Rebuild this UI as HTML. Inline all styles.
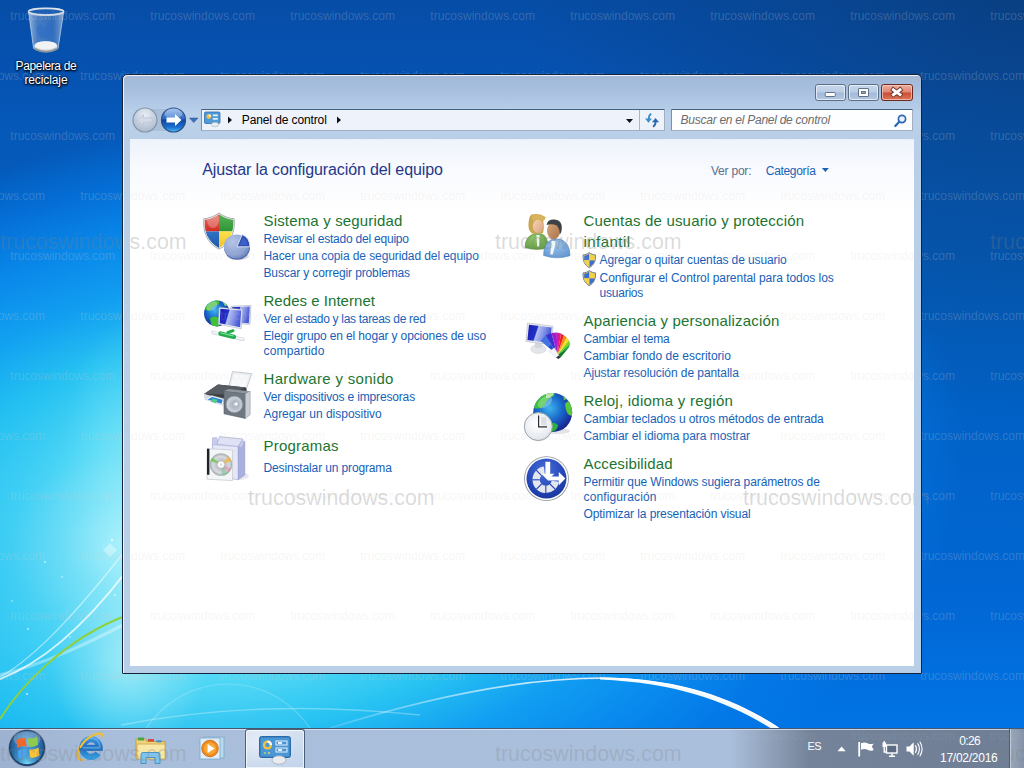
<!DOCTYPE html>
<html lang="es"><head><meta charset="utf-8"><title>Panel de control</title>
<style>
html,body{margin:0;padding:0;}
body{width:1024px;height:768px;overflow:hidden;position:relative;background:#0d55b0;font-family:"Liberation Sans",sans-serif;font-size:12px;}
.abs{position:absolute;}
.t{position:absolute;white-space:nowrap;margin:0;padding:0;}
#desk{position:absolute;left:0;top:0;width:1024px;height:768px;overflow:hidden;
 background:
  radial-gradient(ellipse 500px 420px at 1024px 0px, rgba(12,50,95,0.5) 0%, rgba(12,55,110,0.3) 50%, rgba(10,60,120,0) 100%),
  linear-gradient(180deg,#064da6 0%,#0651b0 8%,#0558b8 16%,#035dbc 35%,#0161c6 55%,#0167d4 78%,#0178ea 100%);}
#glow{position:absolute;left:-1259px;top:-968px;width:3000px;height:3000px;transform:rotate(-10deg);
 background:radial-gradient(ellipse 731px 413px at 50% 50%, rgba(165,240,251,1) 0%, rgba(140,232,248,1) 18.3%, rgba(85,218,246,1) 33%, rgba(40,195,242,1) 48%, rgba(18,160,242,0.97) 62%, rgba(10,142,240,0.88) 75.2%, rgba(5,124,234,0.6) 87.8%, rgba(3,110,222,0) 100%);}
#glow2{position:absolute;left:0;top:0;width:1024px;height:768px;
 background:
  radial-gradient(ellipse 120px 300px at 0px 580px, rgba(12,178,240,0.36) 0%, rgba(12,178,240,0.2) 50%, rgba(12,178,240,0) 100%),
  radial-gradient(ellipse 60px 120px at 125px 440px, rgba(150,234,248,0.3) 0%, rgba(150,234,248,0) 100%),
  radial-gradient(ellipse 110px 90px at 120px 545px, rgba(175,242,252,0.8) 0%, rgba(150,236,250,0.4) 50%, rgba(120,228,248,0) 100%),
  radial-gradient(ellipse 80px 90px at 128px 660px, rgba(170,236,246,0.85) 0%, rgba(150,230,246,0.45) 55%, rgba(120,228,248,0) 100%);}
.wm{position:absolute;white-space:nowrap;font-family:"Liberation Sans",sans-serif;pointer-events:none;}
.wms{font-size:12px;line-height:12px;color:rgba(205,205,205,0.24);}
.wmb{font-size:21.4px;line-height:22px;color:rgba(128,128,128,0.26);}
#win{position:absolute;left:122px;top:74px;width:800px;height:600px;box-sizing:border-box;border:1px solid #14233a;border-radius:5px 5px 1px 1px;
 background:linear-gradient(180deg,#a3b8d6 0px,#a5bddc 11px,#afc7e4 25px,#b9d0ea 38px,#bbd1ea 45px,#b9cfe8 65px,#b9cfe8 100%);
 box-shadow:inset 1px 1px 0 0 rgba(245,249,254,0.9);}
#content{position:absolute;left:130px;top:139px;width:784px;height:527px;background:#fff;
 background:linear-gradient(180deg,#eef3fb 0px,#f8fafe 30px,#ffffff 70px,#ffffff 100%);}
#addr{position:absolute;left:201px;top:109px;width:464px;height:22px;box-sizing:border-box;border:1px solid #a3afc0;border-top-color:#46607f;border-left-color:#7f8fa6;background:#eef3fb;border-radius:1px;}
#search{position:absolute;left:671px;top:109px;width:242px;height:22px;box-sizing:border-box;border:1px solid #a3afc0;border-top-color:#46607f;border-left-color:#7f8fa6;background:#fdfeff;border-radius:1px;}
#taskbar{position:absolute;left:0;top:728px;width:1024px;height:40px;box-sizing:border-box;border-top:1px solid #46586f;
 background:linear-gradient(90deg,#9db2d0 0px,#a9bedb 120px,#aabfdc 730px,#8d9db5 775px,#74839a 810px,#6f7e95 1024px);}
#taskbar:before{content:"";position:absolute;left:0;top:0;width:1024px;height:1px;background:rgba(220,232,246,0.8);}
.wms2{font-size:12px;line-height:12px;color:rgba(205,205,205,0.18);}
.wmb2{font-size:21.4px;line-height:22px;color:rgba(128,128,128,0.28);}
#wmdesk{position:absolute;left:0;top:0;width:1024px;height:768px;overflow:hidden;}
#wmwin{position:absolute;left:130px;top:139px;width:784px;height:527px;overflow:hidden;}
#wmwin2{position:absolute;left:-130px;top:-139px;width:1024px;height:768px;}
</style></head>
<body>
<div id="desk">
<div id="glow"></div><div id="glow2"></div>
<svg class="abs" style="left:0;top:0" width="1024" height="768" viewBox="0 0 1024 768">
 <defs>
  <linearGradient id="sw1" x1="0" y1="0" x2="1" y2="0"><stop offset="0" stop-color="#fff" stop-opacity="0.15"/><stop offset="0.45" stop-color="#fff" stop-opacity="0.75"/><stop offset="0.75" stop-color="#fff" stop-opacity="1"/><stop offset="1" stop-color="#fff" stop-opacity="1"/></linearGradient>
 </defs>
 <!-- big white swoosh bottom -->
 <path d="M330 728 C 420 700, 520 678, 603 678 C 680 679, 735 700, 778 728" fill="none" stroke="url(#sw1)" stroke-width="1.6"/>
 <path d="M600 677.5 C 680 678, 735 698, 781 729 L 772 729 C 730 703, 680 683, 600 679.5z" fill="#ffffff" opacity="0.95"/>
 <!-- faint arcs -->
 <circle cx="228" cy="782" r="98" fill="#ffffff" fill-opacity="0.03" stroke="#ffffff" stroke-opacity="0.2" stroke-width="1.2"/>
 <path d="M121 725 Q 260 698 420 715" fill="none" stroke="#ffffff" stroke-opacity="0.3" stroke-width="1.4"/>
 <path d="M900 728 Q 960 705 1024 690" fill="none" stroke="#ffffff" stroke-opacity="0.0" stroke-width="1"/>
 <!-- left swooshes -->
 <path d="M0 675 C 45 664, 90 642, 125 624" fill="none" stroke="#ffffff" stroke-opacity="0.35" stroke-width="3.2"/>
 <path d="M0 677 C 40 655, 88 598, 125 551" fill="none" stroke="#ffffff" stroke-opacity="0.5" stroke-width="1.3"/>
 <path d="M0 679 C 50 660, 95 612, 125 573" fill="none" stroke="#ffffff" stroke-opacity="0.75" stroke-width="2"/>
 <path d="M103 550 l7 -7 l7 7 l-7 7z" fill="#ffffff" opacity="0.35"/>
 <path d="M0 719 C 18 690, 62 640, 125 616" fill="none" stroke="#8ed13c" stroke-width="1.9"/>
 <g fill="#ffffff" opacity="0.7"><circle cx="45" cy="562" r="0.9"/><circle cx="62" cy="577" r="0.8"/><circle cx="28" cy="629" r="0.9"/><circle cx="70" cy="637" r="0.8"/><circle cx="112" cy="540" r="1.2"/><circle cx="27" cy="694" r="1.1"/><circle cx="12" cy="601" r="0.8"/><circle cx="115" cy="595" r="0.9"/></g>
</svg>
</div>
<svg class="abs" style="left:20px;top:4px" width="56" height="54" viewBox="20 4 56 54">
 <defs>
  <linearGradient id="binG" x1="0" y1="0" x2="1" y2="0"><stop offset="0" stop-color="#cfe0f4" stop-opacity="0.7"/><stop offset="0.25" stop-color="#86aadc" stop-opacity="0.5"/><stop offset="0.7" stop-color="#6f9ad2" stop-opacity="0.42"/><stop offset="1" stop-color="#c0d4ee" stop-opacity="0.65"/></linearGradient>
 </defs>
 <path d="M28.6 12 L33.6 48.5 Q46 54.5 58 48.5 L63.6 12 Q46 18 28.6 12z" fill="url(#binG)" stroke="#b9cbe2" stroke-width="0.8"/>
 <path d="M36 28 l5 -4 l3 5 l6 -8 l4 10 l-5 8 l-10 -2z" fill="#2f6cc4" opacity="0.6"/>
 <ellipse cx="45.8" cy="46.4" rx="11.6" ry="5.2" fill="#d9dde2"/>
 <ellipse cx="45.8" cy="45.2" rx="11" ry="4" fill="#f1f2f4"/>
 <path d="M34.4 47.5 Q46 54 57.4 47.5 L57 50 Q46 55.5 34.8 50z" fill="#8d949c"/>
 <ellipse cx="46.1" cy="11.8" rx="17.6" ry="3.4" fill="#3f78c4" fill-opacity="0.45" stroke="#c9d3df" stroke-width="1.6"/>
 <ellipse cx="46.1" cy="11.4" rx="17.8" ry="3.2" fill="none" stroke="#eef2f7" stroke-width="0.6"/>
</svg>
<div id="taskbar"></div>
<!-- active task button -->
<div class="abs" style="left:245px;top:729px;width:60px;height:39px;box-sizing:border-box;border:1px solid #4e5f78;border-bottom:none;border-radius:3px 3px 0 0;background:radial-gradient(ellipse 40px 30px at 12px 14px,rgba(255,255,255,0.45),rgba(255,255,255,0)),linear-gradient(180deg,#d6e2f2 0%,#cbdaee 50%,#c3d4ec 100%);box-shadow:inset 0 0 0 1px rgba(255,255,255,0.7);"></div>
<!-- show desktop -->
<div class="abs" style="left:1009px;top:729px;width:15px;height:39px;box-sizing:border-box;border-left:1px solid #4f5d72;background:linear-gradient(90deg,#9aa7ba,#8392a8);box-shadow:inset 1px 0 0 rgba(220,228,240,0.6);"></div>
<svg class="abs" style="left:0;top:728px" width="1024" height="40" viewBox="0 0 1024 40">
 <defs>
  <radialGradient id="orb" cx="0.5" cy="0.35" r="0.75"><stop offset="0" stop-color="#5fa6d8"/><stop offset="0.5" stop-color="#2a6aa8"/><stop offset="0.85" stop-color="#154578"/><stop offset="1" stop-color="#0d2f57"/></radialGradient>
  <linearGradient id="ieG" x1="0" y1="0" x2="0" y2="1"><stop offset="0" stop-color="#3a93de"/><stop offset="0.5" stop-color="#1c66bd"/><stop offset="1" stop-color="#2d9be4"/></linearGradient>
  <radialGradient id="orbglow" cx="0.5" cy="1" r="0.7"><stop offset="0" stop-color="#7fe2ff" stop-opacity="0.95"/><stop offset="0.5" stop-color="#45b4e8" stop-opacity="0.55"/><stop offset="1" stop-color="#3aa0e0" stop-opacity="0"/></radialGradient>
 </defs>
 <!-- start orb -->
 <circle cx="27" cy="20" r="18.6" fill="#3c5878" opacity="0.55"/>
 <circle cx="27" cy="20" r="17.4" fill="url(#orb)" stroke="#1d3557" stroke-width="1"/>
 <circle cx="27" cy="20" r="16.2" fill="url(#orbglow)"/>
 <ellipse cx="27" cy="11" rx="13.5" ry="8" fill="#ffffff" opacity="0.22"/>
 <g transform="translate(28,19.6) rotate(-7) scale(1.18)">
  <path d="M-9 -7.5 q4 -2.2 8 -0.6 v7 q-4 -1.6 -8 0.6z" fill="#f0672c"/>
  <path d="M0.8 -8 q4 1.8 8 -0.4 v7 q-4 2.2 -8 0.4z" fill="#8fcb4c"/>
  <path d="M-9 1.8 q4 -2.2 8 -0.6 v7 q-4 -1.6 -8 0.6z" fill="#4aa3ee"/>
  <path d="M0.8 1.3 q4 1.8 8 -0.4 v7 q-4 2.2 -8 0.4z" fill="#fbc23a"/>
 </g>
 <!-- IE -->
 <g transform="translate(0,-1)">
  <path d="M78.5 31 q-3.5 -4 3 -13" fill="none" stroke="#e8b12c" stroke-width="2.2" stroke-linecap="round"/>
  <path d="M82.6 20.8 L99.6 20.8 A8.6 8.8 0 1 0 98 26.2" fill="none" stroke="url(#ieG)" stroke-width="6.2"/>
  <path d="M82.6 20.8 L99.6 20.8 A8.6 8.8 0 0 0 84 14.6" fill="none" stroke="#6cc0f2" stroke-width="2" opacity="0.6"/>
  <path d="M80.6 20 q4 -8 13 -12 q8 -3 9.6 1" fill="none" stroke="#f0bd38" stroke-width="2.2" stroke-linecap="round"/>
  <path d="M78.5 31 q1 3 5 1.6" fill="none" stroke="#e8b12c" stroke-width="1.8" stroke-linecap="round"/>
 </g>
 <!-- Explorer -->
 <g transform="translate(135,8)">
  <path d="M1 3 h9 l2 2.5 h18 v17 h-29z" fill="#f0d27a" stroke="#c09a3a" stroke-width="0.9"/>
  <rect x="3" y="1.5" width="6" height="3" fill="#49a742"/><rect x="13" y="3" width="6" height="2.5" fill="#d64a3a"/><rect x="21.5" y="4.2" width="5" height="2.2" fill="#3f8fd8"/>
  <rect x="2" y="8" width="28" height="15" rx="1" fill="#f8e7a6" stroke="#c9a648" stroke-width="0.8"/>
  <path d="M6 27.5 v-9 q0 -2 2 -2 h15 q2 0 2 2 v9 h-5 v-6 h-9 v6z" fill="#7fc4ee" stroke="#3f8dc2" stroke-width="0.9"/>
 </g>
 <!-- Media Player -->
 <g transform="translate(199,8)">
  <rect x="5" y="1" width="20" height="21" fill="#b9d9ef" stroke="#7aa9cc" stroke-width="0.8"/>
  <rect x="1" y="2" width="20" height="21" fill="#dfeefa" stroke="#7aa9cc" stroke-width="0.8"/>
  <circle cx="11" cy="12.5" r="8.3" fill="#f08a1c" stroke="#c86a10" stroke-width="0.8"/>
  <circle cx="11" cy="12.5" r="6" fill="#f7a83a"/>
  <path d="M8.6 8 l7 4.5 l-7 4.5z" fill="#ffffff"/>
 </g>
 <!-- Control panel task icon -->
 <g transform="translate(259,8)">
  <rect x="0.5" y="0.5" width="31" height="21" rx="2" fill="#3d86c6" stroke="#2a6aa8" stroke-width="1"/>
  <rect x="2" y="2" width="28" height="18" rx="1" fill="#4b97d6"/>
  <circle cx="8.5" cy="9" r="4.6" fill="#f2c23c"/><path d="M8.5 9 v-4.6 a4.6 4.6 0 0 1 4.6 4.6z" fill="#ffffff"/>
  <circle cx="8.5" cy="9" r="2.2" fill="#4b97d6"/>
  <rect x="17" y="5" width="11" height="4" fill="#4b97d6" stroke="#e4effa" stroke-width="1"/><rect x="19" y="6" width="4" height="2" fill="#e4effa"/><rect x="17" y="12" width="11" height="4" fill="#4b97d6" stroke="#e4effa" stroke-width="1"/><rect x="19" y="13" width="4" height="2" fill="#e4effa"/>
  <circle cx="6" cy="17" r="1" fill="#9be06a"/><circle cx="10" cy="17" r="1" fill="#f4d35a"/>
  <ellipse cx="20" cy="24" rx="7" ry="4.2" fill="#e9ecef" stroke="#98a2ad" stroke-width="0.7"/>
 </g>
 <!-- tray -->
 <path d="M837.5 23.3 l4.1 -4.8 l4.1 4.8z" fill="#ffffff"/>
 <g fill="none" stroke="#ffffff" stroke-width="1.4">
  <path d="M859.2 14 v14.5" stroke-width="1.8"/>
  <path d="M861 15.2 q3.5 -1.6 6.5 0 q3 1.6 6.3 0.3 l-2 3 l2 3.6 q-3.3 1.3 -6.3 -0.3 q-3 -1.6 -6.5 0z" fill="#ffffff" stroke="none"/>
 </g>
 <g>
  <rect x="886.5" y="17" width="10.5" height="8" fill="#5c6b80" stroke="#ffffff" stroke-width="1.4"/>
  <path d="M889 28.3 h6 M892 25 v3" stroke="#ffffff" stroke-width="1.4"/>
  <path d="M884.2 13 v11 h2" stroke="#ffffff" stroke-width="1.4" fill="none"/>
  <rect x="882.5" y="14.5" width="3.6" height="4.5" fill="#ffffff"/>
 </g>
 <g>
  <path d="M906.5 18.5 h3 l4.2 -4.2 v13.4 l-4.2 -4.2 h-3z" fill="#ffffff"/>
  <path d="M915.5 17.5 q2 3.5 0 7 M917.8 15.6 q3.2 5.4 0 10.8 M920 14 q4.2 7 0 14" fill="none" stroke="#ffffff" stroke-width="1.1" stroke-linecap="round"/>
 </g>
</svg>
<div id="wmdesk">
<div class="wm wms" style="left:10.3px;top:10.1px">trucoswindows.com</div>
<div class="wm wms" style="left:150.3px;top:10.1px">trucoswindows.com</div>
<div class="wm wms" style="left:290.3px;top:10.1px">trucoswindows.com</div>
<div class="wm wms" style="left:430.3px;top:10.1px">trucoswindows.com</div>
<div class="wm wms" style="left:570.3px;top:10.1px">trucoswindows.com</div>
<div class="wm wms" style="left:710.3px;top:10.1px">trucoswindows.com</div>
<div class="wm wms" style="left:850.3px;top:10.1px">trucoswindows.com</div>
<div class="wm wms" style="left:990.3px;top:10.1px">trucoswindows.com</div>
<div class="wm wms" style="left:1130.3px;top:10.1px">trucoswindows.com</div>
<div class="wm wms" style="left:-59.7px;top:70.1px">trucoswindows.com</div>
<div class="wm wms" style="left:80.3px;top:70.1px">trucoswindows.com</div>
<div class="wm wms" style="left:220.3px;top:70.1px">trucoswindows.com</div>
<div class="wm wms" style="left:360.3px;top:70.1px">trucoswindows.com</div>
<div class="wm wms" style="left:500.3px;top:70.1px">trucoswindows.com</div>
<div class="wm wms" style="left:640.3px;top:70.1px">trucoswindows.com</div>
<div class="wm wms" style="left:780.3px;top:70.1px">trucoswindows.com</div>
<div class="wm wms" style="left:920.3px;top:70.1px">trucoswindows.com</div>
<div class="wm wms" style="left:1060.3px;top:70.1px">trucoswindows.com</div>
<div class="wm wms" style="left:10.3px;top:130.1px">trucoswindows.com</div>
<div class="wm wms" style="left:150.3px;top:130.1px">trucoswindows.com</div>
<div class="wm wms" style="left:290.3px;top:130.1px">trucoswindows.com</div>
<div class="wm wms" style="left:430.3px;top:130.1px">trucoswindows.com</div>
<div class="wm wms" style="left:570.3px;top:130.1px">trucoswindows.com</div>
<div class="wm wms" style="left:710.3px;top:130.1px">trucoswindows.com</div>
<div class="wm wms" style="left:850.3px;top:130.1px">trucoswindows.com</div>
<div class="wm wms" style="left:990.3px;top:130.1px">trucoswindows.com</div>
<div class="wm wms" style="left:1130.3px;top:130.1px">trucoswindows.com</div>
<div class="wm wms" style="left:-59.7px;top:190.1px">trucoswindows.com</div>
<div class="wm wms" style="left:80.3px;top:190.1px">trucoswindows.com</div>
<div class="wm wms" style="left:220.3px;top:190.1px">trucoswindows.com</div>
<div class="wm wms" style="left:360.3px;top:190.1px">trucoswindows.com</div>
<div class="wm wms" style="left:500.3px;top:190.1px">trucoswindows.com</div>
<div class="wm wms" style="left:640.3px;top:190.1px">trucoswindows.com</div>
<div class="wm wms" style="left:780.3px;top:190.1px">trucoswindows.com</div>
<div class="wm wms" style="left:920.3px;top:190.1px">trucoswindows.com</div>
<div class="wm wms" style="left:1060.3px;top:190.1px">trucoswindows.com</div>
<div class="wm wms" style="left:10.3px;top:250.1px">trucoswindows.com</div>
<div class="wm wms" style="left:150.3px;top:250.1px">trucoswindows.com</div>
<div class="wm wms" style="left:290.3px;top:250.1px">trucoswindows.com</div>
<div class="wm wms" style="left:430.3px;top:250.1px">trucoswindows.com</div>
<div class="wm wms" style="left:570.3px;top:250.1px">trucoswindows.com</div>
<div class="wm wms" style="left:710.3px;top:250.1px">trucoswindows.com</div>
<div class="wm wms" style="left:850.3px;top:250.1px">trucoswindows.com</div>
<div class="wm wms" style="left:990.3px;top:250.1px">trucoswindows.com</div>
<div class="wm wms" style="left:1130.3px;top:250.1px">trucoswindows.com</div>
<div class="wm wms" style="left:-59.7px;top:310.1px">trucoswindows.com</div>
<div class="wm wms" style="left:80.3px;top:310.1px">trucoswindows.com</div>
<div class="wm wms" style="left:220.3px;top:310.1px">trucoswindows.com</div>
<div class="wm wms" style="left:360.3px;top:310.1px">trucoswindows.com</div>
<div class="wm wms" style="left:500.3px;top:310.1px">trucoswindows.com</div>
<div class="wm wms" style="left:640.3px;top:310.1px">trucoswindows.com</div>
<div class="wm wms" style="left:780.3px;top:310.1px">trucoswindows.com</div>
<div class="wm wms" style="left:920.3px;top:310.1px">trucoswindows.com</div>
<div class="wm wms" style="left:1060.3px;top:310.1px">trucoswindows.com</div>
<div class="wm wms" style="left:10.3px;top:370.1px">trucoswindows.com</div>
<div class="wm wms" style="left:150.3px;top:370.1px">trucoswindows.com</div>
<div class="wm wms" style="left:290.3px;top:370.1px">trucoswindows.com</div>
<div class="wm wms" style="left:430.3px;top:370.1px">trucoswindows.com</div>
<div class="wm wms" style="left:570.3px;top:370.1px">trucoswindows.com</div>
<div class="wm wms" style="left:710.3px;top:370.1px">trucoswindows.com</div>
<div class="wm wms" style="left:850.3px;top:370.1px">trucoswindows.com</div>
<div class="wm wms" style="left:990.3px;top:370.1px">trucoswindows.com</div>
<div class="wm wms" style="left:1130.3px;top:370.1px">trucoswindows.com</div>
<div class="wm wms" style="left:-59.7px;top:430.1px">trucoswindows.com</div>
<div class="wm wms" style="left:80.3px;top:430.1px">trucoswindows.com</div>
<div class="wm wms" style="left:220.3px;top:430.1px">trucoswindows.com</div>
<div class="wm wms" style="left:360.3px;top:430.1px">trucoswindows.com</div>
<div class="wm wms" style="left:500.3px;top:430.1px">trucoswindows.com</div>
<div class="wm wms" style="left:640.3px;top:430.1px">trucoswindows.com</div>
<div class="wm wms" style="left:780.3px;top:430.1px">trucoswindows.com</div>
<div class="wm wms" style="left:920.3px;top:430.1px">trucoswindows.com</div>
<div class="wm wms" style="left:1060.3px;top:430.1px">trucoswindows.com</div>
<div class="wm wms" style="left:10.3px;top:490.1px">trucoswindows.com</div>
<div class="wm wms" style="left:150.3px;top:490.1px">trucoswindows.com</div>
<div class="wm wms" style="left:290.3px;top:490.1px">trucoswindows.com</div>
<div class="wm wms" style="left:430.3px;top:490.1px">trucoswindows.com</div>
<div class="wm wms" style="left:570.3px;top:490.1px">trucoswindows.com</div>
<div class="wm wms" style="left:710.3px;top:490.1px">trucoswindows.com</div>
<div class="wm wms" style="left:850.3px;top:490.1px">trucoswindows.com</div>
<div class="wm wms" style="left:990.3px;top:490.1px">trucoswindows.com</div>
<div class="wm wms" style="left:1130.3px;top:490.1px">trucoswindows.com</div>
<div class="wm wms" style="left:-59.7px;top:550.1px">trucoswindows.com</div>
<div class="wm wms" style="left:80.3px;top:550.1px">trucoswindows.com</div>
<div class="wm wms" style="left:220.3px;top:550.1px">trucoswindows.com</div>
<div class="wm wms" style="left:360.3px;top:550.1px">trucoswindows.com</div>
<div class="wm wms" style="left:500.3px;top:550.1px">trucoswindows.com</div>
<div class="wm wms" style="left:640.3px;top:550.1px">trucoswindows.com</div>
<div class="wm wms" style="left:780.3px;top:550.1px">trucoswindows.com</div>
<div class="wm wms" style="left:920.3px;top:550.1px">trucoswindows.com</div>
<div class="wm wms" style="left:1060.3px;top:550.1px">trucoswindows.com</div>
<div class="wm wms" style="left:10.3px;top:610.1px">trucoswindows.com</div>
<div class="wm wms" style="left:150.3px;top:610.1px">trucoswindows.com</div>
<div class="wm wms" style="left:290.3px;top:610.1px">trucoswindows.com</div>
<div class="wm wms" style="left:430.3px;top:610.1px">trucoswindows.com</div>
<div class="wm wms" style="left:570.3px;top:610.1px">trucoswindows.com</div>
<div class="wm wms" style="left:710.3px;top:610.1px">trucoswindows.com</div>
<div class="wm wms" style="left:850.3px;top:610.1px">trucoswindows.com</div>
<div class="wm wms" style="left:990.3px;top:610.1px">trucoswindows.com</div>
<div class="wm wms" style="left:1130.3px;top:610.1px">trucoswindows.com</div>
<div class="wm wms" style="left:-59.7px;top:670.1px">trucoswindows.com</div>
<div class="wm wms" style="left:80.3px;top:670.1px">trucoswindows.com</div>
<div class="wm wms" style="left:220.3px;top:670.1px">trucoswindows.com</div>
<div class="wm wms" style="left:360.3px;top:670.1px">trucoswindows.com</div>
<div class="wm wms" style="left:500.3px;top:670.1px">trucoswindows.com</div>
<div class="wm wms" style="left:640.3px;top:670.1px">trucoswindows.com</div>
<div class="wm wms" style="left:780.3px;top:670.1px">trucoswindows.com</div>
<div class="wm wms" style="left:920.3px;top:670.1px">trucoswindows.com</div>
<div class="wm wms" style="left:1060.3px;top:670.1px">trucoswindows.com</div>
<div class="wm wms" style="left:10.3px;top:730.1px;opacity:0.45">trucoswindows.com</div>
<div class="wm wms" style="left:150.3px;top:730.1px;opacity:0.45">trucoswindows.com</div>
<div class="wm wms" style="left:290.3px;top:730.1px;opacity:0.45">trucoswindows.com</div>
<div class="wm wms" style="left:430.3px;top:730.1px;opacity:0.45">trucoswindows.com</div>
<div class="wm wms" style="left:570.3px;top:730.1px;opacity:0.45">trucoswindows.com</div>
<div class="wm wms" style="left:710.3px;top:730.1px;opacity:0.45">trucoswindows.com</div>
<div class="wm wms" style="left:850.3px;top:730.1px;opacity:0.45">trucoswindows.com</div>
<div class="wm wms" style="left:990.3px;top:730.1px;opacity:0.45">trucoswindows.com</div>
<div class="wm wms" style="left:1130.3px;top:730.1px;opacity:0.45">trucoswindows.com</div>
<div class="wm wmb" style="left:0.0px;top:231.1px">trucoswindows.com</div>
<div class="wm wmb" style="left:495.0px;top:231.1px">trucoswindows.com</div>
<div class="wm wmb" style="left:990.0px;top:231.1px">trucoswindows.com</div>
<div class="wm wmb" style="left:248.0px;top:487.1px">trucoswindows.com</div>
<div class="wm wmb" style="left:743.0px;top:487.1px">trucoswindows.com</div>
<div class="wm wmb" style="left:0.0px;top:743.1px">trucoswindows.com</div>
<div class="wm wmb" style="left:495.0px;top:743.1px">trucoswindows.com</div>
<div class="wm wmb" style="left:990.0px;top:743.1px">trucoswindows.com</div>
</div>
<div id="win"></div>
<!-- window chrome -->
<div id="addr"></div>
<div class="abs" style="left:639px;top:110px;width:1px;height:20px;background:#a9b6c6"></div>
<div id="search"></div>
<svg class="abs" style="left:122px;top:75px" width="799" height="66" viewBox="0 0 799 66">
 <defs>
  <radialGradient id="gBack" cx="0.5" cy="0.3" r="0.7"><stop offset="0" stop-color="#e9eef5"/><stop offset="0.6" stop-color="#c3cedd"/><stop offset="1" stop-color="#aab8cc"/></radialGradient>
  <linearGradient id="gFwd" x1="0" y1="0" x2="0" y2="1"><stop offset="0" stop-color="#7fb2ea"/><stop offset="0.45" stop-color="#2a67c4"/><stop offset="0.5" stop-color="#0f459f"/><stop offset="0.8" stop-color="#1a6fd0"/><stop offset="1" stop-color="#49c0f5"/></linearGradient>
  <linearGradient id="gBtn" x1="0" y1="0" x2="0" y2="1"><stop offset="0" stop-color="#c9d9ec"/><stop offset="0.48" stop-color="#bacde6"/><stop offset="0.52" stop-color="#a3badb"/><stop offset="1" stop-color="#b4c8e3"/></linearGradient>
  <linearGradient id="gClose" x1="0" y1="0" x2="0" y2="1"><stop offset="0" stop-color="#eeb0a0"/><stop offset="0.48" stop-color="#e08672"/><stop offset="0.52" stop-color="#cc4c33"/><stop offset="1" stop-color="#dc7a5c"/></linearGradient>
 </defs>
 <!-- nav pill behind -->
 <path d="M23 34 h28 v22 h-28z" fill="#9fb2cc" opacity="0.55"/>
 <!-- back (disabled) -->
 <circle cx="23" cy="45" r="12" fill="url(#gBack)" stroke="#8595ab" stroke-width="1.2"/>
 <path d="M15.5 45 l6 -5.5 v3.3 h8.5 v4.4 h-8.5 v3.3z" fill="#d3dbe6" stroke="#b4c0d0" stroke-width="0.6"/>
 <!-- forward -->
 <circle cx="51.5" cy="45" r="12" fill="url(#gFwd)" stroke="#2c4f86" stroke-width="1.2"/>
 <ellipse cx="51.5" cy="38.5" rx="9" ry="5" fill="#ffffff" opacity="0.28"/>
 <path d="M59.5 45 l-6.5 -6 v3.6 h-8.5 v4.8 h8.5 v3.6z" fill="#ffffff"/>
 <!-- small dropdown -->
 <path d="M67.5 43 h8.5 l-4.25 4.6z" fill="#3d6fb5" stroke="#2b5595" stroke-width="0.5"/>
 <!-- CP icon in address bar -->
 <g transform="translate(82.5,37)">
  <rect x="0" y="0" width="15.5" height="11.5" rx="1.3" fill="#4f9ad8" stroke="#2c6fb0" stroke-width="0.8"/>
  <circle cx="4.3" cy="4.6" r="2.4" fill="#f2c23c"/><path d="M4.3 4.6 v-2.4 a2.4 2.4 0 0 1 2.4 2.4z" fill="#fff"/>
  <rect x="8.3" y="2.5" width="5" height="1.7" fill="#e8f2fb"/><rect x="8.3" y="6" width="5" height="1.7" fill="#e8f2fb"/>
  <ellipse cx="10.5" cy="12.5" rx="3.6" ry="2.3" fill="#e9ecef" stroke="#9aa4ae" stroke-width="0.5"/>
 </g>
 <!-- breadcrumb arrows -->
 <path d="M106 41.5 l4 3.5 l-4 3.5z" fill="#111"/>
 <path d="M215 41.5 l4 3.5 l-4 3.5z" fill="#111"/>
 <!-- addr dropdown -->
 <path d="M504 44 h7 l-3.5 4z" fill="#111"/>
 <!-- refresh arrows -->
 <path d="M529.2 38.8 q-2.6 1.6 -2.4 5.2" fill="none" stroke="#3a8ec4" stroke-width="1.8"/>
 <path d="M523 43.6 h7 l-3.5 4.2z" fill="#3a8ec4"/>
 <path d="M531 51.8 q2.6 -1.4 2.6 -5" fill="none" stroke="#2a68b4" stroke-width="1.8"/>
 <path d="M530 47.2 h7 l-3.5 -4.2z" fill="#2a68b4"/>
 <!-- magnifier -->
 <g transform="translate(772,39)"><circle cx="8" cy="5" r="3.6" fill="#e8f2fc" stroke="#2f68b0" stroke-width="1.7"/><path d="M5.3 7.8 l-4 4.2" stroke="#2f68b0" stroke-width="2.3" stroke-linecap="round"/></g>
 <!-- caption buttons -->
 <g>
  <rect x="693.5" y="9.5" width="30" height="16" rx="2.2" fill="url(#gBtn)" stroke="#5d6f88"/>
  <rect x="694.5" y="10.5" width="28" height="14" rx="2" fill="none" stroke="#eef3fa" stroke-opacity="0.8"/>
  <rect x="703.3" y="17.5" width="10" height="4" rx="0.8" fill="#fdfdfe" stroke="#55657c" stroke-width="0.9"/>
  <rect x="726.5" y="9.5" width="30" height="16" rx="2.2" fill="url(#gBtn)" stroke="#5d6f88"/>
  <rect x="727.5" y="10.5" width="28" height="14" rx="2" fill="none" stroke="#eef3fa" stroke-opacity="0.8"/>
  <rect x="736.5" y="13.5" width="10" height="8" rx="0.5" fill="#fdfdfe" stroke="#55657c" stroke-width="0.9"/>
  <rect x="739.5" y="16.5" width="4" height="2" fill="#8d9db3" stroke="#55657c" stroke-width="0.8"/>
  <rect x="759.5" y="9.5" width="31" height="16" rx="2.2" fill="url(#gClose)" stroke="#6b2a22"/>
  <rect x="760.5" y="10.5" width="29" height="14" rx="2" fill="none" stroke="#f6d2c8" stroke-opacity="0.7"/>
  <path d="M771.4 14.8 l6.6 4.8 M778 14.8 l-6.6 4.8" stroke="#6a2f28" stroke-width="4.6" stroke-linecap="square"/>
  <path d="M771.4 14.8 l6.6 4.8 M778 14.8 l-6.6 4.8" stroke="#ffffff" stroke-width="2.9" stroke-linecap="square"/>
 </g>
 <!-- Categoria triangle drawn in content coords -->
</svg>
<div id="content"></div>
<svg class="abs" style="left:0;top:0" width="1024" height="768" viewBox="0 0 1024 768">
 <defs>
  <linearGradient id="shR" x1="0" y1="0" x2="0" y2="1"><stop offset="0" stop-color="#e8776a"/><stop offset="1" stop-color="#d42a20"/></linearGradient>
  <linearGradient id="shG" x1="0" y1="0" x2="0" y2="1"><stop offset="0" stop-color="#5cb85a"/><stop offset="1" stop-color="#2f9435"/></linearGradient>
  <linearGradient id="shB" x1="0" y1="0" x2="0" y2="1"><stop offset="0" stop-color="#2f72c4"/><stop offset="1" stop-color="#1c55a5"/></linearGradient>
  <linearGradient id="shY" x1="0" y1="0" x2="0" y2="1"><stop offset="0" stop-color="#fbe04a"/><stop offset="1" stop-color="#f0c020"/></linearGradient>
  <radialGradient id="pie" cx="0.35" cy="0.3" r="0.8"><stop offset="0" stop-color="#b5c4e6"/><stop offset="0.7" stop-color="#8ea3d2"/><stop offset="1" stop-color="#5d77b8"/></radialGradient>
  <radialGradient id="globe" cx="0.42" cy="0.38" r="0.68"><stop offset="0" stop-color="#3fb4ec"/><stop offset="0.45" stop-color="#1b6ccc"/><stop offset="0.85" stop-color="#172f9c"/><stop offset="1" stop-color="#14247a"/></radialGradient>
  <linearGradient id="scr" x1="0" y1="0" x2="1" y2="0.3"><stop offset="0" stop-color="#1a22b8"/><stop offset="0.45" stop-color="#2b3cd0"/><stop offset="0.5" stop-color="#aab6f2"/><stop offset="1" stop-color="#6a7be0"/></linearGradient>
  <linearGradient id="scr2" x1="0" y1="0" x2="1" y2="0.25"><stop offset="0" stop-color="#1a1cb4"/><stop offset="0.42" stop-color="#2230c8"/><stop offset="0.47" stop-color="#b4bff4"/><stop offset="0.75" stop-color="#7f8fe6"/><stop offset="1" stop-color="#4a5ad6"/></linearGradient>
  <radialGradient id="cone" cx="0.55" cy="0.5" r="0.6"><stop offset="0" stop-color="#f3f5f8"/><stop offset="0.25" stop-color="#aab3bf"/><stop offset="0.8" stop-color="#cdd4dc"/><stop offset="1" stop-color="#e6eaef"/></radialGradient>
  <radialGradient id="cd" cx="0.5" cy="0.5" r="0.5"><stop offset="0" stop-color="#ffffff"/><stop offset="0.22" stop-color="#f4f4f4"/><stop offset="0.3" stop-color="#b8bcc0"/><stop offset="0.75" stop-color="#d9dcdf"/><stop offset="1" stop-color="#a9aeb3"/></radialGradient>
  <radialGradient id="acc" cx="0.45" cy="0.3" r="0.8"><stop offset="0" stop-color="#4a6fd8"/><stop offset="0.6" stop-color="#2447b8"/><stop offset="1" stop-color="#172f92"/></radialGradient>
  <radialGradient id="clock" cx="0.45" cy="0.4" r="0.65"><stop offset="0" stop-color="#ffffff"/><stop offset="0.8" stop-color="#e9edf1"/><stop offset="1" stop-color="#c3cad2"/></radialGradient>
  <linearGradient id="skinF" x1="0" y1="0" x2="1" y2="1"><stop offset="0" stop-color="#f6d2b5"/><stop offset="1" stop-color="#d9a480"/></linearGradient>
  <linearGradient id="skinM" x1="0" y1="0" x2="1" y2="1"><stop offset="0" stop-color="#d9a77c"/><stop offset="1" stop-color="#a8714a"/></linearGradient>
  <radialGradient id="bodyG" cx="0.4" cy="0.3" r="0.8"><stop offset="0" stop-color="#8fc46a"/><stop offset="1" stop-color="#5f9a3e"/></radialGradient>
  <radialGradient id="bodyB" cx="0.45" cy="0.3" r="0.8"><stop offset="0" stop-color="#9cc3ea"/><stop offset="1" stop-color="#5f94cf"/></radialGradient>
  <clipPath id="clipShield"><path d="M219 214.2 C214 217.6 209 219.4 204.8 219.8 C204 232 208 242 219 248 C230 242 234 232 233.2 219.8 C229 219.4 224 217.6 219 214.2z"/></clipPath>
  <clipPath id="clipG1"><circle cx="217" cy="313.4" r="13"/></clipPath>
  <clipPath id="clipG2"><circle cx="552.7" cy="412.6" r="19.5"/></clipPath>
 </defs>

 <!-- 1. Sistema y seguridad -->
 <g>
  <path d="M219 213 C214 216.6 208.6 218.5 203.8 218.8 C202.8 232.5 207.2 243.2 219 249.2 C230.8 243.2 235.2 232.5 234.2 218.8 C229.4 218.5 224 216.6 219 213z" fill="#f4f5f7" stroke="#9aa0a8" stroke-width="0.9"/>
  <g clip-path="url(#clipShield)">
   <rect x="203" y="212" width="16" height="19.4" fill="url(#shR)"/>
   <rect x="219" y="212" width="16" height="19.4" fill="url(#shG)"/>
   <rect x="203" y="231.4" width="16" height="19" fill="url(#shB)"/>
   <rect x="219" y="231.4" width="16" height="19" fill="url(#shY)"/>
   <ellipse cx="213" cy="220" rx="6" ry="8" fill="#ffffff" opacity="0.25"/>
  </g>
  <ellipse cx="238" cy="256.5" rx="11" ry="3.5" fill="#9aa3b5" opacity="0.35"/>
  <ellipse cx="237" cy="247.6" rx="13" ry="12.2" fill="#4b66b0"/>
  <ellipse cx="236.6" cy="246.6" rx="12.8" ry="12" fill="url(#pie)"/>
  <path d="M237 246.8 L242.2 234.6 A13 12.2 0 0 1 249.8 246.8z" fill="#2c4bb0" stroke="#dfe6f6" stroke-width="0.9"/>
  <path d="M239.3 245.3 L242.9 237.2 A10 10 0 0 1 247.6 245.3z" fill="#3c5fc8"/>
 </g>

 <!-- 2. Redes e Internet -->
 <g>
  <circle cx="217" cy="313.4" r="13" fill="url(#globe)"/>
  <g clip-path="url(#clipG1)" fill="#3fbf3a">
   <path d="M205 304 q5 -5 12 -4 q4 2 1 5 q-5 0 -7 5 q-4 2 -6 -1z"/>
   <path d="M210 318 q5 -3 9 0 q3 4 0 8 q-5 3 -8 -2z"/>
   <path d="M222 301 q5 0 7 4 l-4 1z" fill="#7fd87a"/>
  </g>
  <ellipse cx="212" cy="306" rx="6" ry="4" fill="#ffffff" opacity="0.3" transform="rotate(-35 212 306)"/>
  <path d="M231 306.2 l20 -0.8 l-1 19 l-18.5 -1.2z" fill="#e4e8f0" stroke="#a9b2c2" stroke-width="0.6"/>
  <path d="M232.2 307.2 l17.6 -0.7 l-0.9 16.8 l-16.2 -1z" fill="url(#scr2)"/>
  <path d="M219.2 307.4 l23.2 2 l-1.2 19.4 l-22.8 -4.6z" fill="#eef1f6" stroke="#a9b2c2" stroke-width="0.6"/>
  <path d="M220.4 308.8 l20.8 1.8 l-1.1 16.6 l-20.4 -4z" fill="url(#scr2)"/>
  <path d="M213 332.4 l30 7" stroke="#d5dbe2" stroke-width="3.6" stroke-linecap="round"/>
  <path d="M213 332.4 l30 7" stroke="#f4f6f8" stroke-width="1.6" stroke-linecap="round"/>
  <path d="M220.5 333.6 l13.5 3.2" stroke="#1fae4a" stroke-width="4.4" stroke-linecap="round"/>
  <path d="M228 332.5 l5 -1.8" stroke="#1fae4a" stroke-width="3" stroke-linecap="round"/>
  <path d="M221 333 l12 2.8" stroke="#7fe09a" stroke-width="1.2" stroke-linecap="round"/>
 </g>

 <!-- 3. Hardware y sonido -->
 <g>
  <path d="M232.5 371.5 l19.2 2.2 l-5.5 16 l-17.6 -2.6z" fill="#eceff2" stroke="#b4bac2" stroke-width="0.7"/>
  <path d="M234 373.5 l15 1.8 l-4 12 l-14.2 -2z" fill="#f8f9fb"/>
  <path d="M204 394 l14 -9.6 l28 3.2 l1.4 6 l-20 8z" fill="#3b3f45"/>
  <path d="M204 394 l14 -9.6 l28 3.2 l-18 7z" fill="#575c63"/>
  <path d="M204 394 l23.4 6 l0 3.4 l-23.4 -5.6z" fill="#d9dde2"/>
  <path d="M204.6 399.2 l7 -3.6 l13 3.4 l-1.6 6.4z" fill="#f2f4f6" stroke="#b8bec6" stroke-width="0.5"/>
  <path d="M207.6 399.4 l4.6 -2.4 l10.4 2.7 l-1 4z" fill="#2a86d8"/>
  <path d="M212.6 398.4 l5 1.3 l-1.6 3.5 l-5 -1.4z" fill="#57c98a"/>
  <path d="M224 391 l21.4 2.4 l0 25 l-21.4 -4.6z" fill="#6f7780" stroke="#565d66" stroke-width="0.6"/>
  <path d="M245.4 393.4 l4.8 -2.2 l0 23.6 l-4.8 3.6z" fill="#c9ced4" stroke="#8c939b" stroke-width="0.5"/>
  <path d="M224 391 l4.6 -2 l21.6 2.2 l-4.8 2.2z" fill="#8f969e"/>
  <circle cx="234.4" cy="404.4" r="8.2" fill="url(#cone)" stroke="#8e959d" stroke-width="0.6"/>
  <circle cx="236.2" cy="404" r="2" fill="#f6f7f9" stroke="#9aa1a9" stroke-width="0.4"/>
 </g>

 <!-- 4. Programas -->
 <g>
  <ellipse cx="238" cy="476" rx="11" ry="4" fill="#9aa3b5" opacity="0.25"/>
  <path d="M212.4 438 l4 -0.6 l2.6 6 l-6.6 4z" fill="#c9cdea" stroke="#9aa0cc" stroke-width="0.5"/>
  <path d="M219.4 436.6 l23.4 2.4 l-4.8 7.6 l-21 -2.4z" fill="#dfe2f6" stroke="#9aa0cc" stroke-width="0.6"/>
  <path d="M238 446.6 l6.8 -5.2 l0 33.6 l-6.8 4.8z" fill="#aab0de" stroke="#8a90c4" stroke-width="0.5"/>
  <path d="M212.6 444.6 l25.4 2 l0 33.2 l-25.4 -5z" fill="#e6e8f8" stroke="#a5abd6" stroke-width="0.6"/>
  <path d="M238 446.6 l4.6 -6 l2.2 0.8 l-3 6.6z" fill="#c4c8ec" stroke="#9aa0cc" stroke-width="0.5"/>
  <rect x="207" y="448.8" width="25.6" height="30.6" fill="#f3f5f7" stroke="#b9c0c8" stroke-width="0.6" transform="skewY(3) translate(0,-11)"/>
  <rect x="207" y="448.8" width="2.4" height="26" fill="#1f2226" transform="skewY(3) translate(0,-11)"/>
  <circle cx="221" cy="464.6" r="11" fill="url(#cd)" stroke="#a9aeb4" stroke-width="0.5"/>
  <path d="M221 464.6 L228.5 456.5 A11 11 0 0 1 231.5 461z" fill="#f2b43c" opacity="0.75"/>
  <path d="M221 464.6 L210.6 461 A11 11 0 0 1 212.6 457.6z" fill="#69c44a" opacity="0.8"/>
  <path d="M221 464.6 L231.3 468.4 A11 11 0 0 1 228.4 472.8z" fill="#e87a9a" opacity="0.45"/>
  <path d="M221 464.6 L228 473.2 A11 11 0 0 1 222 475.6z" fill="#6cc38a" opacity="0.5"/>
  <circle cx="221" cy="464.6" r="3.4" fill="#ffffff" stroke="#c4c8cc" stroke-width="0.5"/>
  <circle cx="221" cy="464.6" r="1.3" fill="#d9dde1"/>
 </g>

 <!-- 5. Cuentas de usuario -->
 <g>
  <path d="M525 247.5 q0 -11 9.5 -14 l6 0 q8 2.4 7.6 14 q-11 4 -23.1 0z" fill="url(#bodyG)" stroke="#4f8433" stroke-width="0.5"/>
  <path d="M536.4 235 l3.2 0 l-0.4 11.6 l-2 0z" fill="#eef3ee"/>
  <path d="M531.5 214.6 q8 -1.8 14.2 2.6 q-1.6 3.4 -2.6 3.6 q1.6 6.6 -0.2 12.4 l-11 0.4 q-4.6 -4 -3.2 -12 q0.6 -5.4 2.8 -7z" fill="#c9a650"/>
  <ellipse cx="538" cy="226.2" rx="5.2" ry="6.8" fill="url(#skinF)"/>
  <path d="M531.5 215 q8 -2 14.2 2.4 q-1.6 3.4 -3 3.4 q-5 -2.6 -9.4 0.4 q-1.6 -2 -1.8 -6.2z" fill="#d6b45c"/>
  <path d="M543.6 255.5 q-0.4 -12.6 9 -16.4 l7.4 0 q10 3.4 10 16.6 q-13 4.4 -26.4 -0.2z" fill="url(#bodyB)" stroke="#4a7ab4" stroke-width="0.5"/>
  <path d="M551.6 241 l4.6 0 l-3.4 13.6 l-2.6 0z" fill="#f4f7fb"/>
  <ellipse cx="553.6" cy="230.6" rx="6.6" ry="8.6" fill="url(#skinM)"/>
  <path d="M546.6 225 q1 -5.8 8 -5.4 q7.6 0.6 7.2 9 q-0.4 4.6 -2 5.6 q0 -5 -2.6 -8.4 q-5 -2.4 -10.6 -0.8z" fill="#3f4245"/>
 </g>

 <!-- 6. Apariencia -->
 <g>
  <ellipse cx="538.4" cy="349" rx="7.6" ry="4.4" fill="#e3e6ea" stroke="#c2c7ce" stroke-width="0.5"/>
  <path d="M535 343 h7 v5 h-7z" fill="#d4d8dd"/>
  <path d="M527.6 323 l25.4 3.2 l-1.4 18.6 l-25.8 -3.4z" fill="#e7eaee" stroke="#b2b8c0" stroke-width="0.6"/>
  <path d="M529 324.8 l22.6 2.8 l-1.2 15.4 l-23 -3z" fill="url(#scr2)"/>
  <g transform="translate(557.4,355)">
   <path d="M0 0 L-16.4 -14 L-11.6 -19.4z" fill="#1f4fd0"/>
   <path d="M0 0 L-11.6 -19.4 L-6 -22z" fill="#3a2fd0"/>
   <path d="M0 0 L-6 -22 L-0.6 -22.6z" fill="#a020d0"/>
   <path d="M0 0 L-0.6 -22.6 L3.6 -21.6z" fill="#e01890"/>
   <path d="M0 0 L3.6 -21.6 L6.6 -19.6z" fill="#f02020"/>
   <path d="M0 0 L6.6 -19.6 L9.4 -17.4z" fill="#f88a18"/>
   <path d="M0 0 L9.4 -17.4 L11.6 -14.8z" fill="#f4e020"/>
   <path d="M0 0 L11.6 -14.8 L12.8 -11z" fill="#7ed420"/>
   <path d="M0 0 L12.8 -11 L11.4 -7.4z" fill="#18a838"/>
   <path d="M0 0 L11.4 -7.4 L3.4 2.2z" fill="#0e7a2c"/>
   <path d="M-16.4 -14 L-11.6 -19.4 L-6 -11 L-9 -7.6z" fill="#5f8fe8" opacity="0.55"/>
   <path d="M-8.4 -3.6 L-3 -7.2 L1.6 0.4 L-1.4 2.6z" fill="#f4f5f7" stroke="#c4c8cc" stroke-width="0.4"/>
   <path d="M-1.4 2.6 L1.6 0.4 L3.4 2.2 L1 4z" fill="#30343a"/>
  </g>
 </g>

 <!-- 7. Reloj -->
 <g>
  <ellipse cx="556" cy="431" rx="14" ry="3" fill="#9aa3b5" opacity="0.3"/>
  <circle cx="552.7" cy="412.6" r="19.5" fill="url(#globe)"/>
  <g clip-path="url(#clipG2)">
   <path d="M534 408 q2 -12 14 -17 q8 -1 6 5 q-7 2 -9 9 q-5 5 -11 3z" fill="#3fc23a"/>
   <path d="M546 392 q6 -2 8 2 q-3 4 -8 4z" fill="#b5e6a0"/>
   <path d="M565 404 q5 -6 8 -2 q2 8 -1 14 q-6 0 -7 -12z" fill="#56c83a"/>
   <path d="M563 394 q3 1 4 5 l-3 1z" fill="#6fd060"/>
   <path d="M548 424 q6 -3 10 1 q0 5 -6 7 q-5 -2 -4 -8z" fill="#2fb03a"/>
  </g>
  <ellipse cx="545" cy="402" rx="8" ry="5" fill="#ffffff" opacity="0.28" transform="rotate(-35 545 402)"/>
  <circle cx="538.3" cy="426.6" r="14" fill="url(#clock)" stroke="#9aa2ab" stroke-width="1"/>
  <circle cx="538.3" cy="426.6" r="12" fill="none" stroke="#d4d9df" stroke-width="0.6" stroke-dasharray="0.8 5.48"/>
  <path d="M538.6 415.6 v11.2 h8.4" fill="none" stroke="#2a2e33" stroke-width="1.2"/>
  <path d="M541 417 h5.5 v8 h-5.5z" fill="#d0d5db" opacity="0.7"/>
 </g>

 <!-- 8. Accesibilidad -->
 <g>
  <circle cx="546.5" cy="478.6" r="22.4" fill="#8f959c"/>
  <circle cx="546.5" cy="478.6" r="21.6" fill="#ffffff"/>
  <circle cx="546.5" cy="478.6" r="20" fill="url(#acc)"/>
  <g transform="translate(545.8,479.8)">
   <path d="M-2 -13.2 A13.3 13.3 0 1 0 13.2 2 L5.9 1 A6 6 0 1 1 -1 -5.9z" fill="#e4e7ee"/>
   <g stroke="#2447b8" stroke-width="1.1">
    <path d="M-4.2 -4.2 L-9.6 -9.6"/><path d="M-6 0 L-13.4 0"/><path d="M-4.2 4.2 L-9.6 9.6"/><path d="M0 6 L0 13.4"/><path d="M4.2 4.2 L9.6 9.6"/>
   </g>
   <path d="M-0.4 -18 h4.8 v12 l4.2 0 l-6.6 6.4 l-6.6 -6.4 l4.2 0z" fill="#ffffff" transform="translate(0,0)"/>
   <path d="M4 -3.2 l9 0 l0 -4.6 l6.6 6.6 l-6.6 6.6 l0 -4.6 l-11 0z" fill="#ffffff"/>
  </g>
 </g>

 <path d="M821.9 168 h7 l-3.5 4.1z" fill="#1a62b5"/>
 <!-- UAC shields -->
 <g>
  <path d="M589.3 252.6 c-2 1.5 -4 2.2 -6.2 2.3 c-0.4 6 1.6 10.2 6.2 12.8 c4.6 -2.6 6.6 -6.8 6.2 -12.8 c-2.2 -0.1 -4.2 -0.8 -6.2 -2.3z" fill="#e9c84a" stroke="#6b7fae" stroke-width="1"/>
  <path d="M589.3 253.8 c-1.7 1.2 -3.4 1.8 -5.1 2 l0 4.4 h5.1z" fill="#3a6fd0"/>
  <path d="M589.3 260.2 h5.2 c-0.2 2.6 -2 5 -5.2 6.6z" fill="#3a6fd0"/>
  <path d="M589.3 253.8 c1.7 1.2 3.4 1.8 5.1 2 l0 4.4 h-5.1z" fill="#f2d24a"/>
  <path d="M589.3 260.2 h-5.2 c0.2 2.6 2 5 5.2 6.6z" fill="#f2d24a"/>
 </g>
 <g transform="translate(0,18)">
  <path d="M589.3 252.6 c-2 1.5 -4 2.2 -6.2 2.3 c-0.4 6 1.6 10.2 6.2 12.8 c4.6 -2.6 6.6 -6.8 6.2 -12.8 c-2.2 -0.1 -4.2 -0.8 -6.2 -2.3z" fill="#e9c84a" stroke="#6b7fae" stroke-width="1"/>
  <path d="M589.3 253.8 c-1.7 1.2 -3.4 1.8 -5.1 2 l0 4.4 h5.1z" fill="#3a6fd0"/>
  <path d="M589.3 260.2 h5.2 c-0.2 2.6 -2 5 -5.2 6.6z" fill="#3a6fd0"/>
  <path d="M589.3 253.8 c1.7 1.2 3.4 1.8 5.1 2 l0 4.4 h-5.1z" fill="#f2d24a"/>
  <path d="M589.3 260.2 h-5.2 c0.2 2.6 2 5 5.2 6.6z" fill="#f2d24a"/>
 </g>
</svg>
<div id="texts">
<div class="t" id="t0" style="left:202.20px;top:162.01px;font-size:16px;line-height:16px;height:16px;color:#1e388a;letter-spacing:-0.117px;">Ajustar la configuración del equipo</div>
<div class="t" id="t1" style="left:711.00px;top:165.09px;font-size:12px;line-height:12px;height:12px;color:#5b6f8c;letter-spacing:-0.223px;">Ver por:</div>
<div class="t" id="t2" style="left:765.80px;top:165.09px;font-size:12px;line-height:12px;height:12px;color:#1a62b5;letter-spacing:-0.334px;">Categoría</div>
<div class="t" id="t3" style="left:241.75px;top:114.14px;font-size:12px;line-height:12px;height:12px;color:#000;letter-spacing:-0.108px;">Panel de control</div>
<div class="t" id="t4" style="left:680.60px;top:114.39px;font-size:12px;line-height:12px;height:12px;color:#6d6d6d;letter-spacing:-0.261px;font-style:italic;">Buscar en el Panel de control</div>
<div class="t" id="t5" style="left:263.50px;top:213.35px;font-size:15px;line-height:15px;height:15px;color:#1b7430;letter-spacing:0.163px;">Sistema y seguridad</div>
<div class="t" id="t6" style="left:263.50px;top:232.89px;font-size:12px;line-height:12px;height:12px;color:#1561b8;letter-spacing:-0.221px;">Revisar el estado del equipo</div>
<div class="t" id="t7" style="left:263.50px;top:250.39px;font-size:12px;line-height:12px;height:12px;color:#1561b8;letter-spacing:-0.092px;">Hacer una copia de seguridad del equipo</div>
<div class="t" id="t8" style="left:263.50px;top:267.39px;font-size:12px;line-height:12px;height:12px;color:#1561b8;letter-spacing:-0.132px;">Buscar y corregir problemas</div>
<div class="t" id="t9" style="left:263.50px;top:293.35px;font-size:15px;line-height:15px;height:15px;color:#1b7430;letter-spacing:0.037px;">Redes e Internet</div>
<div class="t" id="t10" style="left:263.50px;top:312.89px;font-size:12px;line-height:12px;height:12px;color:#1561b8;letter-spacing:-0.306px;">Ver el estado y las tareas de red</div>
<div class="t" id="t11" style="left:263.50px;top:330.39px;font-size:12px;line-height:12px;height:12px;color:#1561b8;letter-spacing:-0.135px;">Elegir grupo en el hogar y opciones de uso</div>
<div class="t" id="t12" style="left:263.50px;top:345.39px;font-size:12px;line-height:12px;height:12px;color:#1561b8;letter-spacing:0.163px;">compartido</div>
<div class="t" id="t13" style="left:263.50px;top:371.05px;font-size:15px;line-height:15px;height:15px;color:#1b7430;letter-spacing:0.305px;">Hardware y sonido</div>
<div class="t" id="t14" style="left:263.50px;top:391.14px;font-size:12px;line-height:12px;height:12px;color:#1561b8;letter-spacing:-0.158px;">Ver dispositivos e impresoras</div>
<div class="t" id="t15" style="left:263.50px;top:407.89px;font-size:12px;line-height:12px;height:12px;color:#1561b8;letter-spacing:-0.022px;">Agregar un dispositivo</div>
<div class="t" id="t16" style="left:263.50px;top:438.35px;font-size:15px;line-height:15px;height:15px;color:#1b7430;letter-spacing:0.210px;">Programas</div>
<div class="t" id="t17" style="left:263.50px;top:462.14px;font-size:12px;line-height:12px;height:12px;color:#1561b8;letter-spacing:-0.137px;">Desinstalar un programa</div>
<div class="t" id="t18" style="left:583.50px;top:213.25px;font-size:15px;line-height:15px;height:15px;color:#1b7430;letter-spacing:0.183px;">Cuentas de usuario y protección</div>
<div class="t" id="t19" style="left:583.50px;top:234.45px;font-size:15px;line-height:15px;height:15px;color:#1b7430;letter-spacing:0.455px;">infantil</div>
<div class="t" id="t20" style="left:599.50px;top:253.59px;font-size:12px;line-height:12px;height:12px;color:#1561b8;letter-spacing:-0.106px;">Agregar o quitar cuentas de usuario</div>
<div class="t" id="t21" style="left:599.50px;top:271.89px;font-size:12px;line-height:12px;height:12px;color:#1561b8;letter-spacing:-0.041px;">Configurar el Control parental para todos los</div>
<div class="t" id="t22" style="left:599.50px;top:286.79px;font-size:12px;line-height:12px;height:12px;color:#1561b8;letter-spacing:-0.220px;">usuarios</div>
<div class="t" id="t23" style="left:583.50px;top:313.25px;font-size:15px;line-height:15px;height:15px;color:#1b7430;letter-spacing:0.180px;">Apariencia y personalización</div>
<div class="t" id="t24" style="left:583.50px;top:332.64px;font-size:12px;line-height:12px;height:12px;color:#1561b8;letter-spacing:-0.129px;">Cambiar el tema</div>
<div class="t" id="t25" style="left:583.50px;top:349.79px;font-size:12px;line-height:12px;height:12px;color:#1561b8;letter-spacing:-0.000px;">Cambiar fondo de escritorio</div>
<div class="t" id="t26" style="left:583.50px;top:366.99px;font-size:12px;line-height:12px;height:12px;color:#1561b8;letter-spacing:-0.073px;">Ajustar resolución de pantalla</div>
<div class="t" id="t27" style="left:583.50px;top:393.10px;font-size:15px;line-height:15px;height:15px;color:#1b7430;letter-spacing:0.243px;">Reloj, idioma y región</div>
<div class="t" id="t28" style="left:583.50px;top:412.79px;font-size:12px;line-height:12px;height:12px;color:#1561b8;letter-spacing:-0.076px;">Cambiar teclados u otros métodos de entrada</div>
<div class="t" id="t29" style="left:583.50px;top:429.99px;font-size:12px;line-height:12px;height:12px;color:#1561b8;letter-spacing:-0.052px;">Cambiar el idioma para mostrar</div>
<div class="t" id="t30" style="left:583.50px;top:456.10px;font-size:15px;line-height:15px;height:15px;color:#1b7430;letter-spacing:0.127px;">Accesibilidad</div>
<div class="t" id="t31" style="left:583.50px;top:476.09px;font-size:12px;line-height:12px;height:12px;color:#1561b8;letter-spacing:-0.092px;">Permitir que Windows sugiera parámetros de</div>
<div class="t" id="t32" style="left:583.50px;top:490.69px;font-size:12px;line-height:12px;height:12px;color:#1561b8;letter-spacing:0.131px;">configuración</div>
<div class="t" id="t33" style="left:583.50px;top:507.59px;font-size:12px;line-height:12px;height:12px;color:#1561b8;letter-spacing:-0.093px;">Optimizar la presentación visual</div>
<div class="t" id="t34" style="left:807.50px;top:740.99px;font-size:11px;line-height:11px;height:11px;color:#fff;letter-spacing:-0.694px;">ES</div>
<div class="t" id="t35" style="left:959.25px;top:735.14px;font-size:12px;line-height:12px;height:12px;color:#fff;letter-spacing:-0.652px;">0:26</div>
<div class="t" id="t36" style="left:940.00px;top:752.14px;font-size:12px;line-height:12px;height:12px;color:#fff;letter-spacing:-0.256px;">17/02/2016</div>
<div class="t" id="t37" style="left:15.60px;top:59.79px;font-size:12px;line-height:12px;height:12px;color:#fff;letter-spacing:-0.370px;text-shadow:0 1px 2px rgba(0,0,0,0.95),1px 1px 2px rgba(0,0,0,0.8),0 0 3px rgba(0,0,0,0.7);">Papelera de</div>
<div class="t" id="t38" style="left:24.40px;top:74.39px;font-size:12px;line-height:12px;height:12px;color:#fff;letter-spacing:-0.102px;text-shadow:0 1px 2px rgba(0,0,0,0.95),1px 1px 2px rgba(0,0,0,0.8),0 0 3px rgba(0,0,0,0.7);">reciclaje</div>
</div>
<div id="wmwin"><div id="wmwin2">
<div class="wm wms2" style="left:10.3px;top:10.1px">trucoswindows.com</div>
<div class="wm wms2" style="left:150.3px;top:10.1px">trucoswindows.com</div>
<div class="wm wms2" style="left:290.3px;top:10.1px">trucoswindows.com</div>
<div class="wm wms2" style="left:430.3px;top:10.1px">trucoswindows.com</div>
<div class="wm wms2" style="left:570.3px;top:10.1px">trucoswindows.com</div>
<div class="wm wms2" style="left:710.3px;top:10.1px">trucoswindows.com</div>
<div class="wm wms2" style="left:850.3px;top:10.1px">trucoswindows.com</div>
<div class="wm wms2" style="left:990.3px;top:10.1px">trucoswindows.com</div>
<div class="wm wms2" style="left:1130.3px;top:10.1px">trucoswindows.com</div>
<div class="wm wms2" style="left:-59.7px;top:70.1px">trucoswindows.com</div>
<div class="wm wms2" style="left:80.3px;top:70.1px">trucoswindows.com</div>
<div class="wm wms2" style="left:220.3px;top:70.1px">trucoswindows.com</div>
<div class="wm wms2" style="left:360.3px;top:70.1px">trucoswindows.com</div>
<div class="wm wms2" style="left:500.3px;top:70.1px">trucoswindows.com</div>
<div class="wm wms2" style="left:640.3px;top:70.1px">trucoswindows.com</div>
<div class="wm wms2" style="left:780.3px;top:70.1px">trucoswindows.com</div>
<div class="wm wms2" style="left:920.3px;top:70.1px">trucoswindows.com</div>
<div class="wm wms2" style="left:1060.3px;top:70.1px">trucoswindows.com</div>
<div class="wm wms2" style="left:10.3px;top:130.1px">trucoswindows.com</div>
<div class="wm wms2" style="left:150.3px;top:130.1px">trucoswindows.com</div>
<div class="wm wms2" style="left:290.3px;top:130.1px">trucoswindows.com</div>
<div class="wm wms2" style="left:430.3px;top:130.1px">trucoswindows.com</div>
<div class="wm wms2" style="left:570.3px;top:130.1px">trucoswindows.com</div>
<div class="wm wms2" style="left:710.3px;top:130.1px">trucoswindows.com</div>
<div class="wm wms2" style="left:850.3px;top:130.1px">trucoswindows.com</div>
<div class="wm wms2" style="left:990.3px;top:130.1px">trucoswindows.com</div>
<div class="wm wms2" style="left:1130.3px;top:130.1px">trucoswindows.com</div>
<div class="wm wms2" style="left:-59.7px;top:190.1px">trucoswindows.com</div>
<div class="wm wms2" style="left:80.3px;top:190.1px">trucoswindows.com</div>
<div class="wm wms2" style="left:220.3px;top:190.1px">trucoswindows.com</div>
<div class="wm wms2" style="left:360.3px;top:190.1px">trucoswindows.com</div>
<div class="wm wms2" style="left:500.3px;top:190.1px">trucoswindows.com</div>
<div class="wm wms2" style="left:640.3px;top:190.1px">trucoswindows.com</div>
<div class="wm wms2" style="left:780.3px;top:190.1px">trucoswindows.com</div>
<div class="wm wms2" style="left:920.3px;top:190.1px">trucoswindows.com</div>
<div class="wm wms2" style="left:1060.3px;top:190.1px">trucoswindows.com</div>
<div class="wm wms2" style="left:10.3px;top:250.1px">trucoswindows.com</div>
<div class="wm wms2" style="left:150.3px;top:250.1px">trucoswindows.com</div>
<div class="wm wms2" style="left:290.3px;top:250.1px">trucoswindows.com</div>
<div class="wm wms2" style="left:430.3px;top:250.1px">trucoswindows.com</div>
<div class="wm wms2" style="left:570.3px;top:250.1px">trucoswindows.com</div>
<div class="wm wms2" style="left:710.3px;top:250.1px">trucoswindows.com</div>
<div class="wm wms2" style="left:850.3px;top:250.1px">trucoswindows.com</div>
<div class="wm wms2" style="left:990.3px;top:250.1px">trucoswindows.com</div>
<div class="wm wms2" style="left:1130.3px;top:250.1px">trucoswindows.com</div>
<div class="wm wms2" style="left:-59.7px;top:310.1px">trucoswindows.com</div>
<div class="wm wms2" style="left:80.3px;top:310.1px">trucoswindows.com</div>
<div class="wm wms2" style="left:220.3px;top:310.1px">trucoswindows.com</div>
<div class="wm wms2" style="left:360.3px;top:310.1px">trucoswindows.com</div>
<div class="wm wms2" style="left:500.3px;top:310.1px">trucoswindows.com</div>
<div class="wm wms2" style="left:640.3px;top:310.1px">trucoswindows.com</div>
<div class="wm wms2" style="left:780.3px;top:310.1px">trucoswindows.com</div>
<div class="wm wms2" style="left:920.3px;top:310.1px">trucoswindows.com</div>
<div class="wm wms2" style="left:1060.3px;top:310.1px">trucoswindows.com</div>
<div class="wm wms2" style="left:10.3px;top:370.1px">trucoswindows.com</div>
<div class="wm wms2" style="left:150.3px;top:370.1px">trucoswindows.com</div>
<div class="wm wms2" style="left:290.3px;top:370.1px">trucoswindows.com</div>
<div class="wm wms2" style="left:430.3px;top:370.1px">trucoswindows.com</div>
<div class="wm wms2" style="left:570.3px;top:370.1px">trucoswindows.com</div>
<div class="wm wms2" style="left:710.3px;top:370.1px">trucoswindows.com</div>
<div class="wm wms2" style="left:850.3px;top:370.1px">trucoswindows.com</div>
<div class="wm wms2" style="left:990.3px;top:370.1px">trucoswindows.com</div>
<div class="wm wms2" style="left:1130.3px;top:370.1px">trucoswindows.com</div>
<div class="wm wms2" style="left:-59.7px;top:430.1px">trucoswindows.com</div>
<div class="wm wms2" style="left:80.3px;top:430.1px">trucoswindows.com</div>
<div class="wm wms2" style="left:220.3px;top:430.1px">trucoswindows.com</div>
<div class="wm wms2" style="left:360.3px;top:430.1px">trucoswindows.com</div>
<div class="wm wms2" style="left:500.3px;top:430.1px">trucoswindows.com</div>
<div class="wm wms2" style="left:640.3px;top:430.1px">trucoswindows.com</div>
<div class="wm wms2" style="left:780.3px;top:430.1px">trucoswindows.com</div>
<div class="wm wms2" style="left:920.3px;top:430.1px">trucoswindows.com</div>
<div class="wm wms2" style="left:1060.3px;top:430.1px">trucoswindows.com</div>
<div class="wm wms2" style="left:10.3px;top:490.1px">trucoswindows.com</div>
<div class="wm wms2" style="left:150.3px;top:490.1px">trucoswindows.com</div>
<div class="wm wms2" style="left:290.3px;top:490.1px">trucoswindows.com</div>
<div class="wm wms2" style="left:430.3px;top:490.1px">trucoswindows.com</div>
<div class="wm wms2" style="left:570.3px;top:490.1px">trucoswindows.com</div>
<div class="wm wms2" style="left:710.3px;top:490.1px">trucoswindows.com</div>
<div class="wm wms2" style="left:850.3px;top:490.1px">trucoswindows.com</div>
<div class="wm wms2" style="left:990.3px;top:490.1px">trucoswindows.com</div>
<div class="wm wms2" style="left:1130.3px;top:490.1px">trucoswindows.com</div>
<div class="wm wms2" style="left:-59.7px;top:550.1px">trucoswindows.com</div>
<div class="wm wms2" style="left:80.3px;top:550.1px">trucoswindows.com</div>
<div class="wm wms2" style="left:220.3px;top:550.1px">trucoswindows.com</div>
<div class="wm wms2" style="left:360.3px;top:550.1px">trucoswindows.com</div>
<div class="wm wms2" style="left:500.3px;top:550.1px">trucoswindows.com</div>
<div class="wm wms2" style="left:640.3px;top:550.1px">trucoswindows.com</div>
<div class="wm wms2" style="left:780.3px;top:550.1px">trucoswindows.com</div>
<div class="wm wms2" style="left:920.3px;top:550.1px">trucoswindows.com</div>
<div class="wm wms2" style="left:1060.3px;top:550.1px">trucoswindows.com</div>
<div class="wm wms2" style="left:10.3px;top:610.1px">trucoswindows.com</div>
<div class="wm wms2" style="left:150.3px;top:610.1px">trucoswindows.com</div>
<div class="wm wms2" style="left:290.3px;top:610.1px">trucoswindows.com</div>
<div class="wm wms2" style="left:430.3px;top:610.1px">trucoswindows.com</div>
<div class="wm wms2" style="left:570.3px;top:610.1px">trucoswindows.com</div>
<div class="wm wms2" style="left:710.3px;top:610.1px">trucoswindows.com</div>
<div class="wm wms2" style="left:850.3px;top:610.1px">trucoswindows.com</div>
<div class="wm wms2" style="left:990.3px;top:610.1px">trucoswindows.com</div>
<div class="wm wms2" style="left:1130.3px;top:610.1px">trucoswindows.com</div>
<div class="wm wms2" style="left:-59.7px;top:670.1px">trucoswindows.com</div>
<div class="wm wms2" style="left:80.3px;top:670.1px">trucoswindows.com</div>
<div class="wm wms2" style="left:220.3px;top:670.1px">trucoswindows.com</div>
<div class="wm wms2" style="left:360.3px;top:670.1px">trucoswindows.com</div>
<div class="wm wms2" style="left:500.3px;top:670.1px">trucoswindows.com</div>
<div class="wm wms2" style="left:640.3px;top:670.1px">trucoswindows.com</div>
<div class="wm wms2" style="left:780.3px;top:670.1px">trucoswindows.com</div>
<div class="wm wms2" style="left:920.3px;top:670.1px">trucoswindows.com</div>
<div class="wm wms2" style="left:1060.3px;top:670.1px">trucoswindows.com</div>
<div class="wm wms2" style="left:10.3px;top:730.1px;opacity:0.45">trucoswindows.com</div>
<div class="wm wms2" style="left:150.3px;top:730.1px;opacity:0.45">trucoswindows.com</div>
<div class="wm wms2" style="left:290.3px;top:730.1px;opacity:0.45">trucoswindows.com</div>
<div class="wm wms2" style="left:430.3px;top:730.1px;opacity:0.45">trucoswindows.com</div>
<div class="wm wms2" style="left:570.3px;top:730.1px;opacity:0.45">trucoswindows.com</div>
<div class="wm wms2" style="left:710.3px;top:730.1px;opacity:0.45">trucoswindows.com</div>
<div class="wm wms2" style="left:850.3px;top:730.1px;opacity:0.45">trucoswindows.com</div>
<div class="wm wms2" style="left:990.3px;top:730.1px;opacity:0.45">trucoswindows.com</div>
<div class="wm wms2" style="left:1130.3px;top:730.1px;opacity:0.45">trucoswindows.com</div>
<div class="wm wmb2" style="left:0.0px;top:231.1px">trucoswindows.com</div>
<div class="wm wmb2" style="left:495.0px;top:231.1px">trucoswindows.com</div>
<div class="wm wmb2" style="left:990.0px;top:231.1px">trucoswindows.com</div>
<div class="wm wmb2" style="left:248.0px;top:487.1px">trucoswindows.com</div>
<div class="wm wmb2" style="left:743.0px;top:487.1px">trucoswindows.com</div>
<div class="wm wmb2" style="left:0.0px;top:743.1px">trucoswindows.com</div>
<div class="wm wmb2" style="left:495.0px;top:743.1px">trucoswindows.com</div>
<div class="wm wmb2" style="left:990.0px;top:743.1px">trucoswindows.com</div>
</div></div>
</body></html>
